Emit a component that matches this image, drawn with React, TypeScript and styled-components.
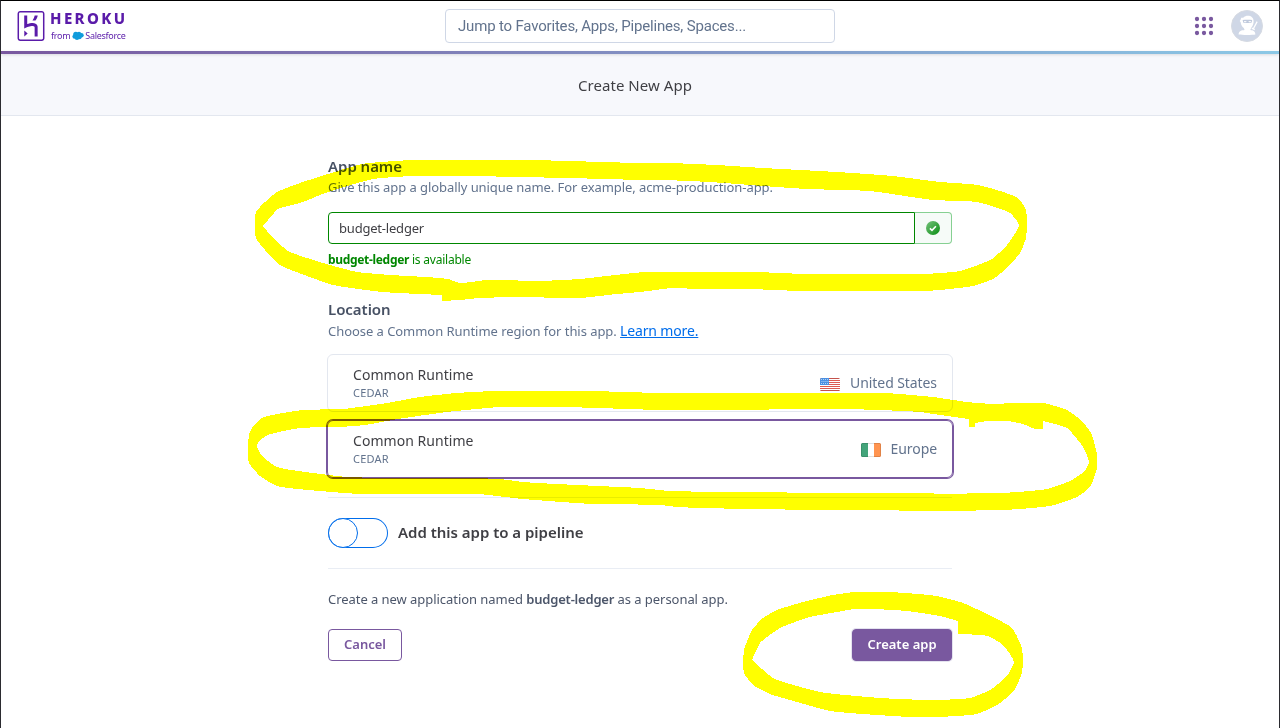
import React from "react";
import styled, { createGlobalStyle, css } from "styled-components";
import { SiHeroku } from "react-icons/si";

const GlobalStyle = createGlobalStyle`
  *, *::before, *::after { box-sizing: border-box; }
  html, body { margin: 0; height: 100%; background: #fff; }
  body { font-family: "Noto Sans", "Open Sans", sans-serif; overflow: hidden; }
  h1, h2, p { margin: 0; }
`;

const Page = styled.div`
  position: relative;
  width: 1280px;
  height: 728px;
  display: flex;
  flex-direction: column;
  border: 1px solid #2b2b30;
  border-top-color: #000;
  border-bottom: 0;
  background: #fff;
  overflow: hidden;
`;

const Header = styled.header`
  flex: none;
  height: 50px;
  display: grid;
  grid-template-columns: 1fr 390px 1fr;
  align-items: center;
  padding: 0 16px;
`;

const Brand = styled.div`
  display: flex;
  align-items: flex-start;
  gap: 4px;
  height: 30px;
  color: #5a1ba9;
`;

const HerokuMark = styled(SiHeroku)`
  width: 30px;
  height: 30px;
  margin: 0 0 0 -1px;
`;

const BrandText = styled.div`
  display: flex;
  flex-direction: column;
`;

const BrandName = styled.span`
  font-size: 15px;
  font-weight: 800;
  line-height: 16px;
  height: 17px;
  margin-top: -1px;
  letter-spacing: 2.4px;
`;

const BrandOwner = styled.span`
  display: flex;
  align-items: center;
  height: 14px;
  margin: 2px 0 0 1px;
  font-size: 9px;
  line-height: 14px;
  letter-spacing: -0.3px;
`;

const CloudIcon = styled.svg`
  width: 12px;
  height: 10px;
  margin: 0 1px 0 2px;
`;

const Search = styled.input`
  width: 390px;
  height: 34px;
  border: 1px solid #cfd7e6;
  border-radius: 4px;
  padding: 0 12px 1px;
  outline: none;
  background: #fff;
  font-family: Roboto, "Noto Sans", sans-serif;
  font-size: 15px;
  letter-spacing: -0.18px;
  &::placeholder { color: #62738d; opacity: 1; }
`;

const Tools = styled.div`
  display: flex;
  justify-content: flex-end;
  align-items: center;
  gap: 17px;
`;

const GradientBar = styled.div`
  position: relative;
  flex: none;
  height: 3px;
  background: linear-gradient(to right, #79589f, #8bc8e6);
  box-shadow: 0 1px 3px rgba(0, 0, 0, 0.12);
`;

const TitleBand = styled.div`
  flex: none;
  height: 62px;
  display: flex;
  justify-content: center;
  align-items: center;
  padding-right: 10px;
  border-bottom: 1px solid #e3e7ef;
  background: #f7f8fc;
`;

const Title = styled.h1`
  font-size: 15px;
  font-weight: 400;
  line-height: 20px;
  letter-spacing: 0.05px;
  color: #3f3f44;
`;

const Form = styled.main`
  width: 624px;
  margin: 40px auto 0;
  display: flex;
  flex-direction: column;
`;

const Heading = styled.h2`
  font-size: 15px;
  font-weight: 600;
  line-height: 20px;
  letter-spacing: -0.04px;
  color: #475164;
`;

const Hint = styled.p`
  font-size: 13px;
  line-height: 20px;
  letter-spacing: -0.07px;
  color: #62738d;
  margin-top: 1px;
`;

const LocationHeading = styled(Heading)`
  margin-top: 29px;
`;

const LocationHint = styled(Hint)`
  margin-top: 2px;
  letter-spacing: -0.05px;
  white-space: pre;
`;

const LearnMore = styled.a`
  font-size: 14px;
  letter-spacing: -0.15px;
  color: #006deb;
  text-decoration: underline;
`;

const NameField = styled.div`
  display: flex;
  height: 32px;
  margin-top: 15px;
`;

const NameInput = styled.input`
  width: 587px;
  border: 1px solid #008700;
  border-radius: 4px 0 0 4px;
  padding: 0 10px;
  outline: none;
  font: 400 13px "Noto Sans", sans-serif;
  letter-spacing: -0.2px;
  color: #3f3f44;
`;

const FieldStatus = styled.div`
  flex: 1;
  display: flex;
  align-items: center;
  justify-content: center;
  border: 1px solid #86d092;
  border-left: 0;
  border-radius: 0 4px 4px 0;
  background: #f6fbf8;
`;

const Availability = styled.p`
  margin-top: 6px;
  font-size: 12px;
  line-height: 20px;
  letter-spacing: -0.22px;
  color: #008700;
`;

const Strong = styled.strong<{ $weight?: number }>`
  font-weight: ${(p) => p.$weight ?? 600};
  letter-spacing: ${(p) => (p.$weight ? -0.32 : -0.2)}px;
`;

const Options = styled.div`
  display: flex;
  flex-direction: column;
  gap: 8px;
  margin: 13px -1px 0;
`;

const Option = styled.div<{ $selected?: boolean }>`
  height: 58px;
  display: flex;
  justify-content: space-between;
  align-items: center;
  padding: 0 15px 0 25px;
  border: 1px solid #e3e7ef;
  border-radius: 6px;
  ${(p) =>
    p.$selected &&
    css`
      border-color: #79589f;
      box-shadow: 0 0 0 1px #79589f;
    `}
`;

const Runtime = styled.div`
  display: flex;
  flex-direction: column;
`;

const RuntimeName = styled.span`
  font-size: 14px;
  line-height: 20px;
  letter-spacing: 0.04px;
  color: #3f3f44;
`;

const RuntimeKind = styled.span`
  font-size: 11px;
  line-height: 16px;
  letter-spacing: 0.2px;
  color: #62738d;
`;

const Region = styled.span`
  display: flex;
  align-items: center;
  gap: 10px;
  padding-top: 2px;
  font-size: 14px;
  line-height: 20px;
  letter-spacing: -0.08px;
  color: #62738d;
`;

const RegionName = styled.span`
  padding-bottom: 2px;
`;

const Divider = styled.div<{ $top: number }>`
  height: 1px;
  margin-top: ${(p) => p.$top}px;
  background: #e9edf4;
`;

const PipelineRow = styled.div`
  display: flex;
  align-items: center;
  gap: 10px;
  margin-top: 20px;
`;

const Toggle = styled.span`
  width: 60px;
  height: 30px;
  display: flex;
  border-radius: 15px;
  box-shadow: inset 0 0 0 1px #006deb;
`;

const Knob = styled.span`
  width: 30px;
  height: 30px;
  border: 1px solid #006deb;
  border-radius: 50%;
  background: #fff;
`;

const PipelineLabel = styled(Heading)`
  padding-bottom: 2px;
  letter-spacing: -0.02px;
  color: #3f3f44;
`;

const Summary = styled.p`
  margin-top: 20px;
  font-size: 13px;
  line-height: 20px;
  letter-spacing: -0.05px;
  color: #4c566a;
`;

const Actions = styled.div`
  display: flex;
  justify-content: space-between;
  margin-top: 20px;
`;

const Button = styled.button<{ $primary?: boolean }>`
  height: 32px;
  width: ${(p) => (p.$primary ? 100 : 74)}px;
  padding: 0 0 2px;
  border: 1px solid #79589f;
  border-radius: 4px;
  background: ${(p) => (p.$primary ? "#79589f" : "#fff")};
  color: ${(p) => (p.$primary ? "#fff" : "#79589f")};
  font: 600 13px "Noto Sans", sans-serif;
  ${(p) => p.$primary && "box-shadow: 0 0 0 1px #e4e3ef;"}
`;

const Highlighter = styled.svg`
  position: absolute;
  top: -1px;
  left: -1px;
  width: 1280px;
  height: 728px;
  pointer-events: none;
  mix-blend-mode: multiply;
`;

const MARKS = [
  [
    "640 163 530 160 412 160 362 164 328 174 300 183 277 192 265 202 256 212 256 238 265 250 280 265 307 276 333 285 383 292 442 295 442 301 460 300 480 298 520 297 580 298 617 294 640 292 673 288 697 289 750 289 800 291 927 291 950 289 973 286 993 279 1008 267 1020 253 1026 238 1026 210 1018 198 1000 191 978 185 940 182 893 176 837 172 763 168 717 165 668 163",
    "640 180 607 179 467 176 412 176 373 179 328 192 300 203 278 209 268 220 263 226 272 237 288 251 323 263 357 272 390 275 448 279 460 283 487 280 540 281 580 279 607 276 645 272 755 272 805 274 925 274 960 271 992 259 1007 245 1019 225 1010 213 977 202 933 200 870 191 807 189 763 186 710 182 663 180",
  ],
  [
    "660 393 590 391 495 391 457 393 420 397 387 403 343 409 303 410 277 414 262 418 252 428 249 435 249 463 260 476 277 486 320 491 360 494 478 494 523 499 593 504 660 505 677 507 747 509 1003 510 1050 506 1077 497 1090 487 1097 468 1097 455 1092 435 1083 422 1067 410 1043 403 1013 403 993 404 967 402 933 397 885 393 720 393",
    "660 410 628 409 563 407 500 407 447 412 398 419 365 425 340 427 300 428 268 435 258 442 257 447 263 457 277 467 313 473 347 477 500 479 523 482 598 486 640 488 670 491 740 492 840 493 1002 493 1047 489 1070 481 1085 471 1089 462 1083 447 1067 428 1043 421 1043 429 1035 429 1023 424 1007 421 987 421 975 423 975 427 969 427 969 419 940 415 920 412 880 410 843 409 798 409 740 410",
  ],
  [
    "855 592 890 592 937 596 963 603 995 618 1012 628 1022 648 1022 673 1013 692 997 705 977 714 937 717 910 717 877 715 830 711 797 702 770 694 753 685 744 673 744 650 752 630 763 618 777 610 807 601 833 595",
    "855 609 873 609 907 611 940 616 958 621 958 634 988 636 1003 645 1014 662 1007 676 990 690 970 698 930 700 880 698 820 692 773 678 752 660 760 643 780 628 810 617 837 612",
  ],
];

type Point = [number, number];

/** Closed curve through the points; sharp turns stay as corners. */
function contour(source: string): string {
  const n = source.split(" ").map(Number);
  const pts: Point[] = [];
  for (let i = 0; i < n.length; i += 2) pts.push([n[i], n[i + 1]]);
  const at = (i: number) => pts[(i + pts.length) % pts.length];
  const tangent = (i: number): Point => {
    const [a, b, c] = [at(i - 1), at(i), at(i + 1)];
    const u: Point = [b[0] - a[0], b[1] - a[1]];
    const v: Point = [c[0] - b[0], c[1] - b[1]];
    const lu = Math.hypot(...u);
    const lv = Math.hypot(...v);
    const cos = (u[0] * v[0] + u[1] * v[1]) / (lu * lv);
    if (cos < 0.35) return [0, 0];
    const t: Point = [u[0] / lu + v[0] / lv, u[1] / lu + v[1] / lv];
    const lt = Math.hypot(...t);
    return [t[0] / lt, t[1] / lt];
  };
  let d = `M${pts[0].join(" ")}`;
  pts.forEach((p, i) => {
    const q = at(i + 1);
    const k = Math.hypot(q[0] - p[0], q[1] - p[1]) * 0.16;
    const t0 = tangent(i);
    const t1 = tangent(i + 1);
    d += `C${p[0] + t0[0] * k} ${p[1] + t0[1] * k} ${q[0] - t1[0] * k} ${q[1] - t1[1] * k} ${q[0]} ${q[1]}`;
  });
  return d + "Z";
}

function AppsGrid() {
  return (
    <svg width="20" height="20" viewBox="0 0 20 20" fill="#79589f">
      {[3, 10, 17].map((y) =>
        [3, 10, 17].map((x) => <circle key={`${x}-${y}`} cx={x} cy={y} r="2.15" />)
      )}
    </svg>
  );
}

function Avatar() {
  return (
    <svg width="32" height="32" viewBox="0 0 32 32">
      <circle cx="16" cy="16" r="15.5" fill="#cfd7e6" stroke="#d6dae2" />
      <g fill="#fff">
        <path d="M10.200 7.800 12.200 7.700C13.600 6.300 15.200 5.800 16.800 5.800c3.400 0 5.800 2 5.800 5.400 0 3-.9 5-2.500 6.700l-.8 2.100c2.400.3 4.900.9 5.100 4.500-2.800.6-13.600.6-16.800 0 .2-3.600 3-4.200 6-4.500l-.8-2.100c-1.700-1.200-3-3.300-3.100-5.700l-1-1.200.9-1.200z" />
        <path d="m25.600 11.200 1.100.9-3.500 6.500.8.600-.6 1-2.900-1.500.6-1.100.9.300z" />
      </g>
      <path d="M11.600 10c2.700-.5 6.800-.5 9.600 0l-.7 2.800c-2.500.4-5.900.4-8.200 0z" fill="#bfc9dc" />
      <path d="m12.900 10.900 2.700.4-.5 1h-1.700zM20.100 10.900l-2.700.4.5 1h1.700z" fill="#fff" />
    </svg>
  );
}

function CheckBadge() {
  return (
    <svg width="14" height="14" viewBox="0 0 14 14">
      <defs>
        <linearGradient id="badge" x1="0" y1="0" x2="1" y2="1">
          <stop offset="0.1" stopColor="#6cbd72" />
          <stop offset="0.9" stopColor="#12921c" />
        </linearGradient>
      </defs>
      <circle cx="7" cy="7" r="7" fill="url(#badge)" />
      <path d="m3.900 7.300 2.100 2 3.900-4" fill="none" stroke="#fff" strokeWidth="1.600" />
    </svg>
  );
}

function FlagUS() {
  return (
    <svg width="20" height="13" viewBox="0 0 20 13">
      <clipPath id="us-flag">
        <rect width="20" height="13" rx="1.500" />
      </clipPath>
      <g clipPath="url(#us-flag)">
        <rect width="20" height="13" fill="#fff" />
        {[0, 2, 4, 6, 8, 10, 12].map((y) => (
          <rect key={y} y={y} width="20" height="1" fill={y === 0 || y === 12 ? "#c4524c" : "#dc5a52"} />
        ))}
        <rect width="9" height="7" fill="#4a90e2" />
        {[1, 3, 5].map((y) =>
          [1, 3, 5, 7].map((x) => (
            <rect key={`${x}-${y}`} x={x + (y === 3 ? 0.5 : 0)} y={y} width="0.9" height="0.9" fill="#cfe1f8" />
          ))
        )}
      </g>
    </svg>
  );
}

function FlagIreland() {
  return (
    <svg width="20" height="14" viewBox="0 0 20 14">
      <rect width="20" height="14" rx="1.500" fill="#fff" />
      <path d="M7 0H1.500A1.500 1.500 0 0 0 0 1.500v11A1.500 1.500 0 0 0 1.500 14H7z" fill="#43a47a" />
      <path d="M13 0h5.500A1.500 1.500 0 0 1 20 1.500v11a1.500 1.500 0 0 1-1.500 1.500H13z" fill="#ff9450" />
      <rect x="0.500" y="0.500" width="19" height="13" rx="1" fill="none" stroke="#000" strokeOpacity="0.120" />
    </svg>
  );
}

function RuntimeOption({ region, flag, selected }: { region: string; flag: React.ReactNode; selected?: boolean }) {
  return (
    <Option $selected={selected}>
      <Runtime>
        <RuntimeName>Common Runtime</RuntimeName>
        <RuntimeKind>CEDAR</RuntimeKind>
      </Runtime>
      <Region>
        {flag}
        <RegionName>{region}</RegionName>
      </Region>
    </Option>
  );
}

export default function App() {
  return (
    <Page>
      <GlobalStyle />
      <Header>
        <Brand>
          <HerokuMark />
          <BrandText>
            <BrandName>HEROKU</BrandName>
            <BrandOwner>
              from
              <CloudIcon viewBox="0 0 12 10" fill="#109cdc">
                <circle cx="3.800" cy="3.400" r="2.600" />
                <circle cx="7" cy="3" r="2.200" />
                <circle cx="9.400" cy="4.300" r="2.300" />
                <circle cx="2.600" cy="5.600" r="2.200" />
                <circle cx="5" cy="6.800" r="2.300" />
                <circle cx="7.600" cy="6.200" r="2" />
              </CloudIcon>
              Salesforce
            </BrandOwner>
          </BrandText>
        </Brand>
        <Search placeholder="Jump to Favorites, Apps, Pipelines, Spaces..." />
        <Tools>
          <AppsGrid />
          <Avatar />
        </Tools>
      </Header>
      <GradientBar />
      <TitleBand>
        <Title>Create New App</Title>
      </TitleBand>
      <Form>
        <Heading>App name</Heading>
        <Hint>Give this app a globally unique name. For example, acme-production-app.</Hint>
        <NameField>
          <NameInput defaultValue="budget-ledger" />
          <FieldStatus>
            <CheckBadge />
          </FieldStatus>
        </NameField>
        <Availability>
          <Strong $weight={700}>budget-ledger</Strong> is available
        </Availability>

        <LocationHeading>Location</LocationHeading>
        <LocationHint>
          Choose a Common Runtime region for this app. <LearnMore>Learn more.</LearnMore>
        </LocationHint>
        <Options>
          <RuntimeOption region="United States" flag={<FlagUS />} />
          <RuntimeOption region="Europe" flag={<FlagIreland />} selected />
        </Options>

        <Divider $top={19} />
        <PipelineRow>
          <Toggle>
            <Knob />
          </Toggle>
          <PipelineLabel>Add this app to a pipeline</PipelineLabel>
        </PipelineRow>
        <Divider $top={20} />

        <Summary>
          Create a new application named <Strong>budget-ledger</Strong> as a personal app.
        </Summary>
        <Actions>
          <Button>Cancel</Button>
          <Button $primary>Create app</Button>
        </Actions>
      </Form>
      <Highlighter viewBox="0 0 1280 728" fill="#ff0" fillRule="evenodd" shapeRendering="crispEdges">
        {MARKS.map((rings, i) => (
          <path key={i} d={rings.map(contour).join("")} />
        ))}
      </Highlighter>
    </Page>
  );
}
